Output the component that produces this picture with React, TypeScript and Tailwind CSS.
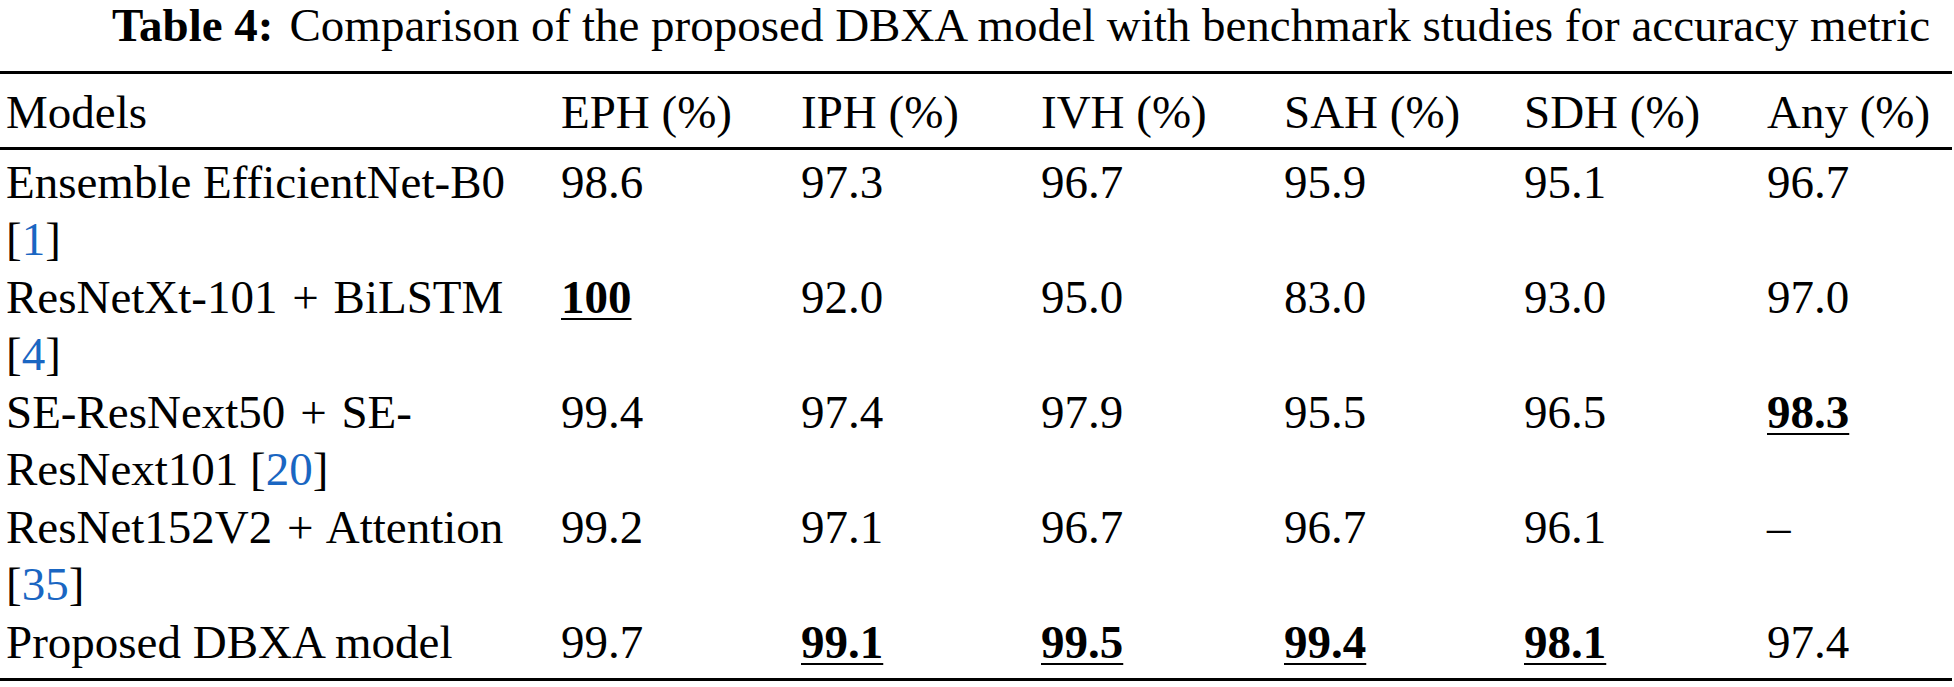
import React from "react";

type Cell = { v: string; b?: boolean };

const F = "font-['Liberation_Serif']";

const Plus = () => <span className="mx-[3px]">+</span>;

const rows: { model: React.ReactNode; cells: Cell[] }[] = [
  {
    model: (
      <>
        Ensemble EfficientNet-B0 [<span className="text-[#1a66c2]">1</span>]
      </>
    ),
    cells: [{ v: "98.6" }, { v: "97.3" }, { v: "96.7" }, { v: "95.9" }, { v: "95.1" }, { v: "96.7" }],
  },
  {
    model: (
      <>
        ResNetXt-101 <Plus /> BiLSTM [<span className="text-[#1a66c2]">4</span>]
      </>
    ),
    cells: [{ v: "100", b: true }, { v: "92.0" }, { v: "95.0" }, { v: "83.0" }, { v: "93.0" }, { v: "97.0" }],
  },
  {
    model: (
      <>
        SE-ResNext50 <Plus /> SE-ResNext101 [<span className="text-[#1a66c2]">20</span>]
      </>
    ),
    cells: [{ v: "99.4" }, { v: "97.4" }, { v: "97.9" }, { v: "95.5" }, { v: "96.5" }, { v: "98.3", b: true }],
  },
  {
    model: (
      <>
        ResNet152V2 <Plus /> Attention [<span className="text-[#1a66c2]">35</span>]
      </>
    ),
    cells: [{ v: "99.2" }, { v: "97.1" }, { v: "96.7" }, { v: "96.7" }, { v: "96.1" }, { v: "–" }],
  },
  {
    model: <>Proposed DBXA model</>,
    cells: [{ v: "99.7" }, { v: "99.1", b: true }, { v: "99.5", b: true }, { v: "99.4", b: true }, { v: "98.1", b: true }, { v: "97.4" }],
  },
];

const headers = ["EPH (%)", "IPH (%)", "IVH (%)", "SAH (%)", "SDH (%)", "Any (%)"];

const gridCls = "grid grid-cols-[561px_240px_240px_243px_240px_243px_1fr]";

export default function App() {
  return (
    <div
      className="font-['Liberation_Serif'] w-[1954px] h-[687px] bg-white text-black overflow-hidden text-[47px] leading-[57.5px]"
      style={{ fontFamily: "'Liberation Serif', serif" }}
    >
      <div className={`${F} h-[71px] pl-[112px] whitespace-nowrap leading-[50px]`}>
        <span className={`${F} font-bold`}>Table 4:</span>
        <span className={`${F} ml-[16px]`}>Comparison of the proposed DBXA model with benchmark studies for accuracy metric</span>
      </div>
      <div className="w-[1952px] border-t-[3px] border-b-[3px] border-black">
        <div className={`${gridCls} pt-[10px] pb-[5px] border-b-[3px] border-black`}>
          <div className={`${F} pl-[6px]`}>Models</div>
          {headers.map((h) => (
            <div key={h} className={`${F} whitespace-nowrap`}>
              {h}
            </div>
          ))}
        </div>
        <div className="pt-[4px] pb-[7px]">
          {rows.map((r, i) => (
            <div key={i} className={gridCls}>
              <div className={`${F} pl-[6px]`}>
                <div className={`${F} w-[530px]`}>{r.model}</div>
              </div>
              {r.cells.map((c, j) => (
                <div key={j} className={`${F} whitespace-nowrap`}>
                  {c.b ? (
                    <span className={`${F} font-bold underline decoration-[2px] underline-offset-[5px]`}>{c.v}</span>
                  ) : (
                    c.v
                  )}
                </div>
              ))}
            </div>
          ))}
        </div>
      </div>
    </div>
  );
}
